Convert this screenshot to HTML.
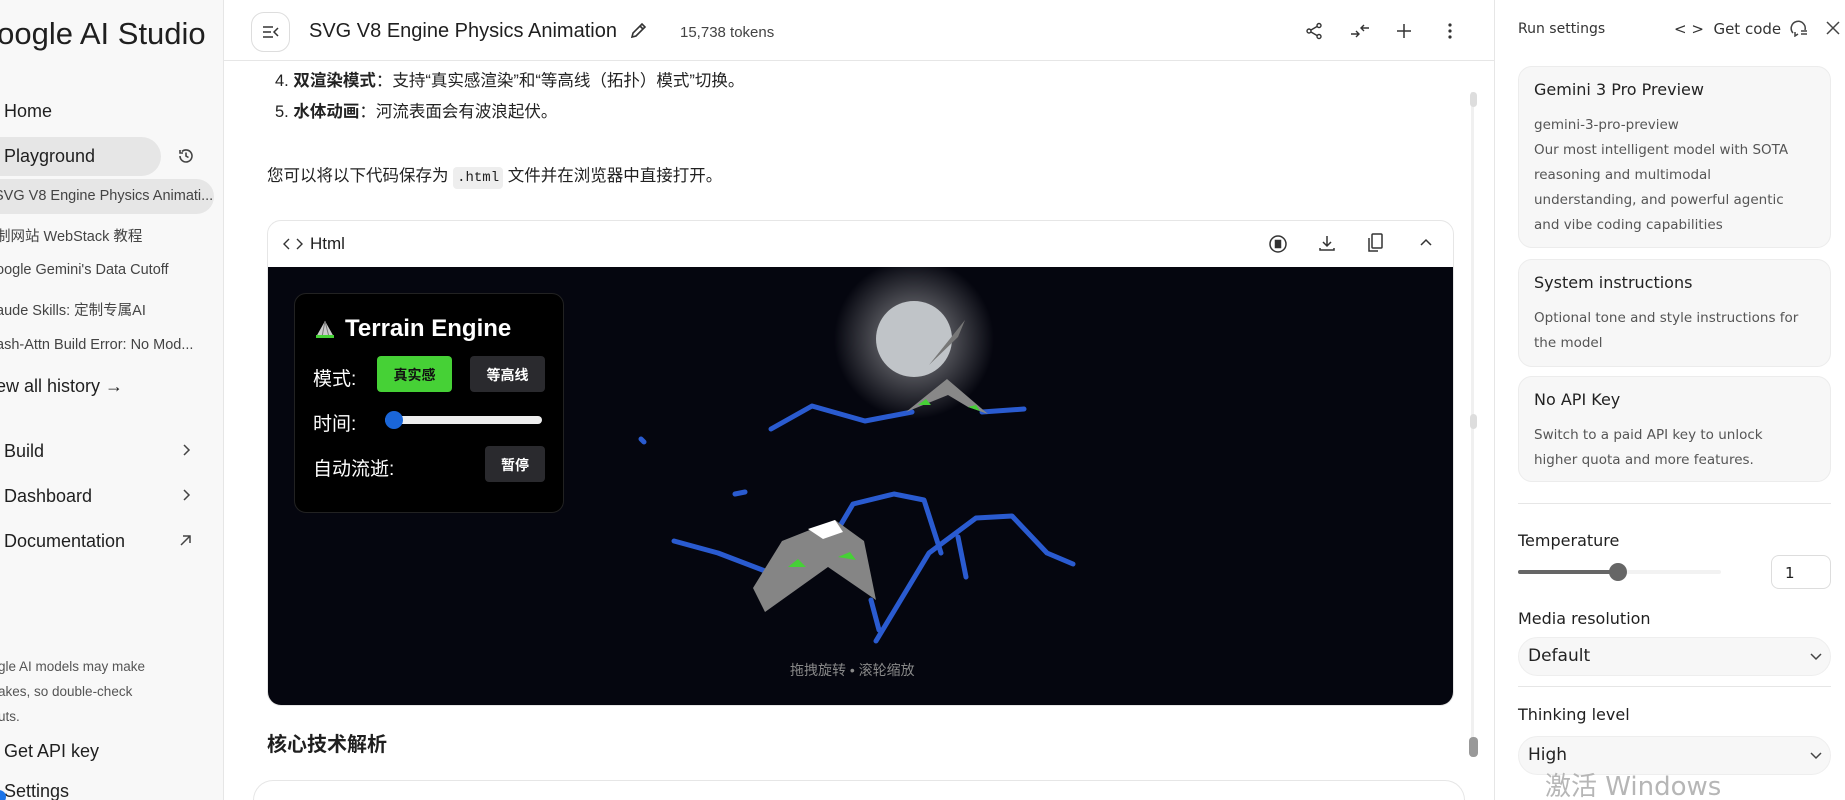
<!DOCTYPE html>
<html style="width:1845px;height:800px;overflow:hidden"><head><meta charset="utf-8"><style>
*{box-sizing:border-box;margin:0;padding:0}
body{width:1845px;height:800px;overflow:hidden;position:relative;background:#fff;font-family:"Liberation Sans","Noto Sans CJK SC",sans-serif;color:#1f1f1f}
.a{position:absolute;white-space:nowrap}
#side{position:absolute;left:0;top:0;width:224px;height:800px;background:#f8f8f8;border-right:1px solid #e6e6e6;overflow:hidden}
#side .nav{font-size:18px;color:#1f1f1f}
#side .h{font-size:14.5px;color:#444}
#right{position:absolute;left:1494px;top:0;width:351px;height:800px;background:#fff;border-left:1px solid #e6e6e6;font-family:"DejaVu Sans","Noto Sans CJK SC",sans-serif}
.card{position:absolute;left:23px;width:313px;background:#f7f7f7;border:1px solid #ececec;border-radius:14px}
.card .t{position:absolute;left:15px;font-size:16px;color:#222}
.card .s{position:absolute;left:15px;font-size:13.5px;color:#555;line-height:25px}
.sel{position:absolute;left:23px;width:313px;height:39px;background:#f7f7f7;border:1px solid #eee;border-radius:20px;font-size:17px;color:#222;padding:8px 0 0 9px}
.btn{position:absolute;border-radius:4px;font-size:14px;font-weight:bold;text-align:center}
</style></head><body>

<div id="side">
  <div class="a" style="left:-27px;top:16px;font-size:31px;color:#1f1f1f">Google AI Studio</div>
  <div class="a nav" style="left:4px;top:101px">Home</div>
  <div style="position:absolute;left:-20px;top:137px;width:181px;height:39px;background:#e6e6e6;border-radius:20px"></div>
  <div class="a nav" style="left:4px;top:146px">Playground</div>
  <svg class="a" style="left:177px;top:147px" width="18" height="18" viewBox="0 0 18 18" fill="none" stroke="#444" stroke-width="1.6"><path d="M3 9a6 6 0 1 0 2-4.5M3 3v3h3M9 5.5V9l2.5 1.5"/></svg>
  <div style="position:absolute;left:-20px;top:179px;width:234px;height:35px;background:#e6e6e6;border-radius:18px"></div>
  <div class="a h" style="left:-6px;top:188px">SVG V8 Engine Physics Animati...</div>
  <div class="a h" style="left:-4px;top:225px">制网站 WebStack 教程</div>
  <div class="a h" style="left:-4px;top:262px">oogle Gemini's Data Cutoff</div>
  <div class="a h" style="left:-4px;top:299px">aude Skills: 定制专属AI</div>
  <div class="a h" style="left:-4px;top:337px">ash-Attn Build Error: No Mod...</div>
  <div class="a" style="left:-4px;top:376px;font-size:18px">ew all history →</div>
  <div class="a nav" style="left:4px;top:441px">Build</div>
  <div class="a nav" style="left:4px;top:486px">Dashboard</div>
  <div class="a nav" style="left:4px;top:531px">Documentation</div>
  <svg class="a" style="left:179px;top:443px" width="14" height="14" fill="none" stroke="#444" stroke-width="1.5"><path d="M5 2l5 5-5 5"/></svg>
  <svg class="a" style="left:179px;top:488px" width="14" height="14" fill="none" stroke="#444" stroke-width="1.5"><path d="M5 2l5 5-5 5"/></svg>
  <svg class="a" style="left:178px;top:533px" width="15" height="15" fill="none" stroke="#444" stroke-width="1.5"><path d="M3 12L12 3M5 3h7v7"/></svg>
  <div class="a" style="left:-2px;top:654px;font-size:13.5px;color:#555;line-height:25px">gle AI models may make<br>akes, so double-check<br>uts.</div>
  <div class="a nav" style="left:4px;top:741px">Get API key</div>
  <div class="a nav" style="left:4px;top:781px">Settings</div>
  <div style="position:absolute;left:-8px;top:790px;width:14px;height:14px;border-radius:50%;background:#1a73e8"></div>
</div>

<!-- main header -->
<div style="position:absolute;left:224px;top:0;width:1270px;height:61px;border-bottom:1px solid #e6e6e6;background:#fff;z-index:2">
  <div style="position:absolute;left:27px;top:12px;width:39px;height:40px;border:1px solid #ddd;border-radius:13px"></div>
  <svg class="a" style="left:37px;top:23px" width="20" height="18" fill="none" stroke="#333" stroke-width="1.5"><path d="M2 4h10M2 9h8M2 14h10M17 5l-4 4 4 4"/></svg>
  <div class="a" style="left:85px;top:20px;font-size:20px;font-weight:500">SVG V8 Engine Physics Animation</div>
  <svg class="a" style="left:405px;top:22px" width="18" height="18" fill="none" stroke="#333" stroke-width="1.6"><path d="M3 15l1-4 9-9 3 3-9 9zM11 4l3 3"/></svg>
  <div class="a" style="left:456px;top:24px;font-size:15px;color:#444">15,738 tokens</div>
  <svg class="a" style="left:1081px;top:22px" width="18" height="18" fill="none" stroke="#333" stroke-width="1.4"><circle cx="4" cy="9" r="2"/><circle cx="14" cy="3.5" r="2"/><circle cx="14" cy="14.5" r="2"/><path d="M6 8l6-3.5M6 10l6 3.5"/></svg>
  <svg class="a" style="left:1126px;top:22px" width="20" height="18" fill="none" stroke="#333" stroke-width="1.4"><path d="M1 12h8M6 9l3 3-3 3M19 6h-8M14 3l-3 3 3 3"/></svg>
  <svg class="a" style="left:1172px;top:23px" width="16" height="16" fill="none" stroke="#333" stroke-width="1.5"><path d="M8 1v14M1 8h14"/></svg>
  <svg class="a" style="left:1223px;top:22px" width="6" height="18" fill="#333"><circle cx="3" cy="3" r="1.6"/><circle cx="3" cy="9" r="1.6"/><circle cx="3" cy="15" r="1.6"/></svg>
</div>

<!-- content -->
<div class="a" style="left:275px;top:67px;font-size:16.5px;color:#222">4. <b>双渲染模式</b>：支持“真实感渲染”和“等高线（拓扑）模式”切换。</div>
<div class="a" style="left:275px;top:98px;font-size:16.5px;color:#222">5. <b>水体动画</b>：河流表面会有波浪起伏。</div>
<div class="a" style="left:267px;top:162px;font-size:16.5px;color:#222">您可以将以下代码保存为 <span style="font-family:'Liberation Mono',monospace;font-size:14px;background:#eee;padding:3px 4px;border-radius:4px">.html</span> 文件并在浏览器中直接打开。</div>

<div style="position:absolute;left:267px;top:220px;width:1187px;height:486px;border:1px solid #e6e6e6;border-radius:14px;background:#fff;overflow:hidden">
  <svg class="a" style="left:15px;top:16px" width="20" height="14" fill="none" stroke="#333" stroke-width="1.4"><path d="M6 2L1 7l5 5M14 2l5 5-5 5"/></svg>
  <div class="a" style="left:42px;top:13px;font-size:17px">Html</div>
  <svg class="a" style="left:1000px;top:13px" width="20" height="20" fill="none" stroke="#333" stroke-width="1.5"><circle cx="10" cy="10" r="8"/><rect x="7.5" y="6.5" width="5" height="7" fill="#333"/></svg>
  <svg class="a" style="left:1050px;top:13px" width="18" height="18" fill="none" stroke="#333" stroke-width="1.5"><path d="M9 2v10M5 8l4 4 4-4M2 14v2h14v-2"/></svg>
  <svg class="a" style="left:1098px;top:12px" width="18" height="20" fill="none" stroke="#333" stroke-width="1.5"><rect x="6" y="1" width="10" height="14" rx="1"/><path d="M3 5v13h9"/></svg>
  <svg class="a" style="left:1151px;top:16px" width="14" height="10" fill="none" stroke="#333" stroke-width="1.5"><path d="M2 8l5-5 5 5"/></svg>
  <div style="position:absolute;left:0;top:46px;width:1185px;height:439px;background:#05060f">
    <svg width="1185" height="439" style="position:absolute;left:0;top:0">
      <defs><radialGradient id="g"><stop offset="0.45" stop-color="#fff" stop-opacity=".3"/><stop offset="1" stop-color="#fff" stop-opacity="0"/></radialGradient></defs>
      <circle cx="646" cy="72" r="80" fill="url(#g)"/>
      <circle cx="646" cy="72" r="38" fill="#c0c4c8"/>
      <path d="M661 98 L697 53 L690 70 Z" fill="#777"/>
      <g fill="none" stroke="#2a5bd0" stroke-width="5" stroke-linejoin="round" stroke-linecap="round">
        <path d="M503 162 L544 139 L597 154 L644 145"/>
        <path d="M714 145 L756 142"/>
        <path d="M406 274 L450 286 L497 304 L556 286 L585 237 L626 227 L656 233 L673 286"/>
        <path d="M608 374 L661 286 L708 251 L744 249 L779 286 L805 297"/>
        <path d="M373 172 l3 3 M467 227 l10 -2 M603 333 l8 30 M690 270 l8 40"/>
      </g>
      <path d="M638 145 L679 112 L720 147 L700 140 L680 128 Z" fill="#888"/>
      <path d="M650 138 l8-6 5 6z M700 140 l8 -2 4 6z" fill="#46d136"/>
      <path d="M485 321 L514 274 L567 253 L596 274 L608 333 L560 300 L497 345 Z" fill="#858585"/>
      <path d="M540 262 L567 253 L575 265 L555 272Z" fill="#fff"/>
      <path d="M520 300 l10 -8 l8 8z M570 290 l12 -5 l6 8z" fill="#46d136"/>
    </svg>
    <div style="position:absolute;left:26px;top:26px;width:270px;height:220px;background:#000;border:1px solid #222;border-radius:12px">
      <svg class="a" style="left:19px;top:25px" width="22" height="20"><path d="M2 18L11 2L20 18Z" fill="#ccc"/><path d="M11 2L8 18M11 2L15 18" stroke="#777"/><rect x="2" y="16" width="18" height="3" fill="#46d136"/></svg>
      <div class="a" style="left:50px;top:21px;font-size:24px;font-weight:bold;color:#fff">Terrain Engine</div>
      <div class="a" style="left:18px;top:70px;font-size:19px;color:#fff">模式:</div>
      <div class="btn" style="left:82px;top:62px;width:75px;height:36px;background:#46d136;color:#111;padding-top:9px">真实感</div>
      <div class="btn" style="left:175px;top:62px;width:75px;height:36px;background:#2a2a2e;color:#fff;padding-top:9px">等高线</div>
      <div class="a" style="left:18px;top:115px;font-size:19px;color:#fff">时间:</div>
      <div style="position:absolute;left:90px;top:122px;width:157px;height:8px;border-radius:4px;background:#eee"></div>
      <div style="position:absolute;left:90px;top:117px;width:18px;height:18px;border-radius:50%;background:#1a66d9"></div>
      <div class="a" style="left:18px;top:160px;font-size:19px;color:#fff">自动流逝:</div>
      <div class="btn" style="left:190px;top:152px;width:60px;height:36px;background:#2a2a2e;color:#fff;padding-top:9px">暂停</div>
    </div>
    <div class="a" style="left:522px;top:393px;font-size:14px;color:#888">拖拽旋转 • 滚轮缩放</div>
  </div>
</div>

<div class="a" style="left:267px;top:728px;font-size:20px;font-weight:bold">核心技术解析</div>
<div style="position:absolute;left:253px;top:780px;width:1212px;height:20px;border:1px solid #e6e6e6;border-bottom:none;border-radius:24px 24px 0 0"></div>

<!-- scrollbar -->
<div style="position:absolute;left:1471px;top:92px;width:3px;height:665px;background:#f0f0f0"></div>
<div style="position:absolute;left:1470px;top:92px;width:7px;height:15px;border-radius:4px;background:#ddd"></div>
<div style="position:absolute;left:1470px;top:414px;width:7px;height:15px;border-radius:4px;background:#ddd"></div>
<div style="position:absolute;left:1469px;top:737px;width:9px;height:20px;border-radius:4px;background:#999"></div>

<div id="right">
  <div class="a" style="left:23px;top:21px;font-size:14px;color:#333">Run settings</div>
  <div class="a" style="left:179px;top:20px;font-size:15px;color:#333">&lt; &gt;&nbsp; Get code</div>
  <svg class="a" style="left:294px;top:19px" width="20" height="18" fill="none" stroke="#444" stroke-width="1.5"><path d="M4 14a7 7 0 1 1 12-3M9 15l-3 2 0-4M12 12h6M12 15h6"/></svg>
  <svg class="a" style="left:331px;top:21px" width="14" height="14" fill="none" stroke="#444" stroke-width="1.5"><path d="M1 1l12 12M13 1L1 13"/></svg>
  <div class="card" style="top:66px;height:182px">
    <div class="a t" style="top:13px">Gemini 3 Pro Preview</div>
    <div class="a s" style="top:46px">gemini-3-pro-preview<br>Our most intelligent model with SOTA<br>reasoning and multimodal<br>understanding, and powerful agentic<br>and vibe coding capabilities</div>
  </div>
  <div class="card" style="top:259px;height:108px">
    <div class="a t" style="top:13px">System instructions</div>
    <div class="a s" style="top:46px">Optional tone and style instructions for<br>the model</div>
  </div>
  <div class="card" style="top:376px;height:106px">
    <div class="a t" style="top:13px">No API Key</div>
    <div class="a s" style="top:46px">Switch to a paid API key to unlock<br>higher quota and more features.</div>
  </div>
  <div style="position:absolute;left:23px;top:503px;width:313px;height:1px;background:#e6e6e6"></div>
  <div class="a" style="left:23px;top:531px;font-size:16px">Temperature</div>
  <div style="position:absolute;left:23px;top:570px;width:203px;height:4px;background:#f2f2f2;border-radius:2px"></div>
  <div style="position:absolute;left:23px;top:570px;width:100px;height:4px;background:#666;border-radius:2px"></div>
  <div style="position:absolute;left:114px;top:563px;width:18px;height:18px;border-radius:50%;background:#666"></div>
  <div style="position:absolute;left:276px;top:555px;width:60px;height:34px;border:1px solid #ddd;border-radius:8px;font-size:15px;padding:8px 0 0 13px">1</div>
  <div class="a" style="left:23px;top:609px;font-size:16px">Media resolution</div>
  <div class="sel" style="top:637px">Default</div>
  <svg class="a" style="left:314px;top:652px" width="14" height="10" fill="none" stroke="#444" stroke-width="1.5"><path d="M2 2l5 5 5-5"/></svg>
  <div style="position:absolute;left:23px;top:686px;width:313px;height:1px;background:#e6e6e6"></div>
  <div class="a" style="left:23px;top:705px;font-size:16px">Thinking level</div>
  <div class="sel" style="top:736px">High</div>
  <svg class="a" style="left:314px;top:751px" width="14" height="10" fill="none" stroke="#444" stroke-width="1.5"><path d="M2 2l5 5 5-5"/></svg>
  <div class="a" style="left:50px;top:766px;font-size:26px;color:#aaa;opacity:.85">激活 Windows</div>
</div>
</body></html>
